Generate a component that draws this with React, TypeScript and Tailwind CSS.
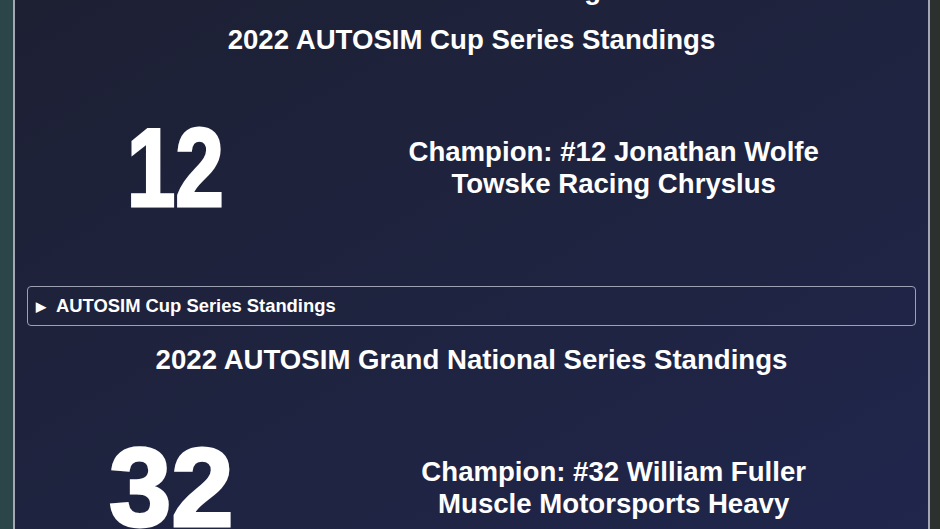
import React from 'react';

interface Standing {
  year: number;
  series: string;
  number: string;
  driver: string;
  team: string;
  narrow?: boolean;
}

const standings: Standing[] = [
  {
    year: 2022,
    series: 'AUTOSIM Cup Series',
    number: '12',
    driver: 'Jonathan Wolfe',
    team: 'Towske Racing Chryslus',
    narrow: true,
  },
  {
    year: 2022,
    series: 'AUTOSIM Grand National Series',
    number: '32',
    driver: 'William Fuller',
    team: 'Muscle Motorsports Heavy',
  },
];

function SeriesBlock({ s }: { s: Standing }) {
  return (
    <section>
      <h2 className="mt-[18px] h-[32px] text-center text-[27.6px] leading-[32px] font-bold text-white">
        {s.year} {s.series} Standings
      </h2>

      <div className="grid h-[224px] grid-cols-3 items-center">
        <div className="flex justify-center">
          <span
            className={
              'inline-block text-[112px] leading-none font-bold text-white [-webkit-text-stroke:3px_#ffffff] ' +
              (s.narrow ? 'scale-x-[0.78]' : 'scale-x-[1.0] -translate-x-[4px]')
            }
          >
            {s.number}
          </span>
        </div>
        <div className="col-span-2 pr-[12px] text-center text-[27.6px] leading-[32px] font-bold text-white">
          <div>
            Champion: #{s.number} {s.driver}
          </div>
          <div>{s.team}</div>
        </div>
      </div>

      <details className="mt-[6px] rounded-[4px] border border-[#9da1b3]">
        <summary className="flex h-[38px] cursor-pointer list-none items-center gap-[10px] pl-[8px] text-[18.4px] font-bold text-white [&::-webkit-details-marker]:hidden">
          <span className="text-[13px] leading-none">▶</span>
          <span>{s.series} Standings</span>
        </summary>
      </details>
    </section>
  );
}

export default function App() {
  return (
    <div className="flex h-screen w-full overflow-hidden font-['Liberation_Sans',Arial,sans-serif]">
      {/* page gutter */}
      <div className="w-[13px] shrink-0 bg-[#2b4548]" />

      <main className="flex-1 overflow-hidden border-x-2 border-[#a4a6b6] bg-gradient-to-br from-[#1d2033] to-[#20264c] px-[12px]">
        {/* tail of the page title, scrolled past */}
        <h1 className="-mt-[26px] h-[32px] text-center text-[27.6px] leading-[32px] font-bold text-white">
          Past Series Standings
        </h1>

        {standings.map((s) => (
          <SeriesBlock key={s.series} s={s} />
        ))}
      </main>

      <div className="w-[10px] shrink-0 bg-[#2c3130]" />
    </div>
  );
}
